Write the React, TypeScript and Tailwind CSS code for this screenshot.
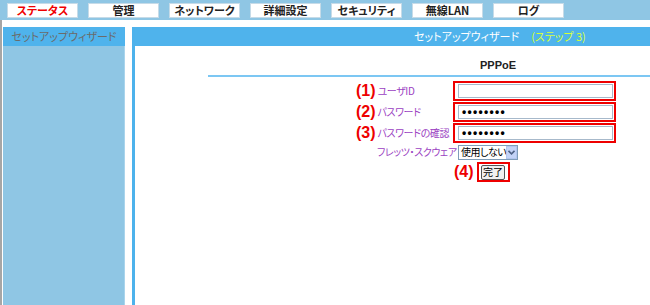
export default function App() {
  const tabs = ["ステータス", "管理", "ネットワーク", "詳細設定", "セキュリティ", "無線LAN", "ログ"];
  return (
    <div className="w-[650px] h-[305px] bg-white overflow-hidden font-['Noto_Sans_CJK_JP',sans-serif] text-[11px] [font-feature-settings:'palt']">
      <div className="h-[20px] bg-[#8fc6e4] flex items-start pt-[3px] pl-[7px] gap-[10px]">
        {tabs.map((t, i) => (
          <div
            key={t}
            className={`w-[71px] h-[15px] bg-white border border-[#c6dbe8] flex items-center justify-center font-bold text-[11px] leading-none ${i === 0 ? "text-[#f00000]" : "text-[#222]"}`}
          >
            {t}
          </div>
        ))}
      </div>
      <div className="flex h-[285px] pt-[7px] border-l-2 border-[#a6a6a6]">
        <div className="ml-[1px] w-[122px] flex flex-col">
          <div className="h-[19px] bg-[#4fb3ec] text-[#6b6b6b] flex items-center justify-center text-[11px] leading-none">
            セットアップウィザード
          </div>
          <div className="flex-1 bg-[#8fc6e4] border-r border-[#a9d4ec]"></div>
        </div>
        <div className="ml-[7px] flex-1 border-l-[3px] border-[#4db2ec] flex flex-col">
          <div className="h-[19px] bg-[#4fb3ec] flex items-center pl-[279px] text-white text-[11px] leading-none">
            <span>セットアップウィザード</span>
            <span className="ml-[12px] text-[#d6ff3a]">(ステップ 3)</span>
          </div>
          <div className="flex-1 bg-white flex flex-col">
            <div className="pt-[12px] pl-[345px] font-bold text-[11px] leading-[14px] text-[#222] font-['Liberation_Sans',sans-serif]">
              PPPoE
            </div>
            <div className="mt-[3px] ml-[73px] h-[2px] bg-[#7cc7f3]"></div>
            <div className="mt-[4px] ml-[221px] flex flex-col gap-[1px]">
              {[
                { n: "(1)", l: "ユーザID", v: "" },
                { n: "(2)", l: "パスワード", v: "••••••••" },
                { n: "(3)", l: "パスワードの確認", v: "••••••••" },
              ].map((r) => (
                <div key={r.n} className="flex items-center h-[20px]">
                  <div className="w-[97px] flex items-center whitespace-nowrap">
                    <span className="text-[#ee0000] font-bold text-[16px] leading-none font-['Liberation_Sans',sans-serif]">{r.n}</span>
                    <span className="ml-[2px] text-[#9b3fc2] text-[10px] leading-none tracking-[-0.4px]">{r.l}</span>
                  </div>
                  <div className="w-[163px] h-[20px] border-2 border-[#ee0000] flex items-center pl-[3px]">
                    <div className="w-[155px] h-[14px] border border-[#a7b9cb] bg-white flex items-center pl-[3px] text-[12px] font-bold tracking-[1.3px] text-black leading-none font-['Liberation_Sans',sans-serif]">
                      {r.v}
                    </div>
                  </div>
                </div>
              ))}
              <div className="flex items-center h-[16px] mb-[1px]">
                <div className="w-[97px] pl-[21px] text-[#9b3fc2] text-[10px] leading-none whitespace-nowrap tracking-[-0.4px]">フレッツ・スクウェア</div>
                <div className="ml-[5px] w-[60px] h-[15px] border border-[#7f9db9] bg-white flex items-center text-[10px] leading-none text-black whitespace-nowrap">
                  <span className="pl-[2px] flex-1 tracking-[-0.5px]">使用しない</span>
                  <span className="w-[13px] h-[13px] bg-[#c3d3f7] border border-[#b2c6ef] flex items-center justify-center">
                    <svg width="7" height="5" viewBox="0 0 7 5"><path d="M0.5 0.8 L3.5 3.8 L6.5 0.8" stroke="#4d6185" strokeWidth="1.6" fill="none" /></svg>
                  </span>
                </div>
              </div>
              <div className="flex items-center h-[20px] pl-[98px]">
                <span className="text-[#ee0000] font-bold text-[16px] leading-none font-['Liberation_Sans',sans-serif]">(4)</span>
                <div className="ml-[3px] w-[33px] h-[20px] border-2 border-[#ee0000] flex items-center justify-center">
                  <div className="w-[24px] h-[15px] border border-[#555] rounded-[2px] bg-[#f0f0f0] flex items-center justify-center text-[10px] leading-none text-black">完了</div>
                </div>
              </div>
            </div>
          </div>
        </div>
      </div>
    </div>
  );
}
